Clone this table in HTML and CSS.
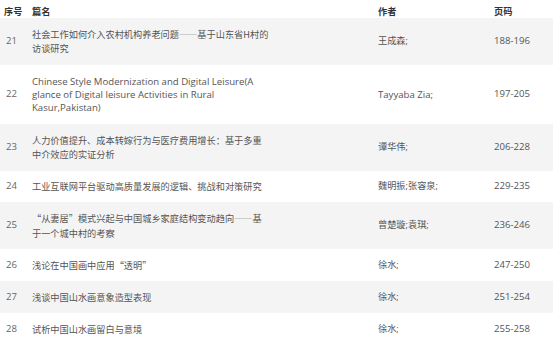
FILE: index.html
```html
<!DOCTYPE html>
<html lang="zh-CN">
<head>
<meta charset="utf-8">
<title>目录</title>
<link rel="stylesheet" href="styles.css">
</head>
<body>
<table class="toc">
  <colgroup>
    <col class="c-no">
    <col class="c-title">
    <col class="c-author">
    <col class="c-page">
  </colgroup>
  <thead>
    <tr>
      <th class="no">序号</th>
      <th>篇名</th>
      <th>作者</th>
      <th>页码</th>
    </tr>
  </thead>
  <tbody>
    <tr class="odd">
      <td class="no">21</td>
      <td class="title zh">社会工作如何介入农村机构养老问题——基于山东省H村的访谈研究</td>
      <td class="author">王成森;</td>
      <td>188-196</td>
    </tr>
    <tr class="en">
      <td class="no">22</td>
      <td class="title">Chinese Style Modernization and Digital Leisure(A glance of Digital leisure Activities in Rural Kasur,Pakistan)</td>
      <td class="author">Tayyaba Zia;</td>
      <td>197-205</td>
    </tr>
    <tr class="odd">
      <td class="no">23</td>
      <td class="title zh">人力价值提升、成本转嫁行为与医疗费用增长：基于多重中介效应的实证分析</td>
      <td class="author">谭华伟;</td>
      <td>206-228</td>
    </tr>
    <tr>
      <td class="no">24</td>
      <td class="title zh">工业互联网平台驱动高质量发展的逻辑、挑战和对策研究</td>
      <td class="author">魏明振;张容泉;</td>
      <td>229-235</td>
    </tr>
    <tr class="odd">
      <td class="no">25</td>
      <td class="title zh">“从妻居”模式兴起与中国城乡家庭结构变动趋向——基于一个城中村的考察</td>
      <td class="author">曾楚璇;袁琪;</td>
      <td>236-246</td>
    </tr>
    <tr>
      <td class="no">26</td>
      <td class="title zh">浅论在中国画中应用“透明”</td>
      <td class="author">徐水;</td>
      <td>247-250</td>
    </tr>
    <tr class="odd">
      <td class="no">27</td>
      <td class="title zh">浅谈中国山水画意象造型表现</td>
      <td class="author">徐水;</td>
      <td>251-254</td>
    </tr>
    <tr>
      <td class="no">28</td>
      <td class="title zh">试析中国山水画留白与意境</td>
      <td class="author">徐水;</td>
      <td>255-258</td>
    </tr>
  </tbody>
</table>
</body>
</html>
```
FILE: styles.css
```css
html, body {
  margin: 0;
  padding: 0;
  background: #ffffff;
}

body {
  font-family: "Open Sans", "Noto Sans CJK SC", sans-serif;
  font-size: 9.6px;
  color: #555555;
}

.toc {
  width: 553px;
  border-collapse: collapse;
  table-layout: fixed;
}

.c-no { width: 32px; }
.c-title { width: 346px; }
.c-author { width: 116px; }
.c-page { width: 59px; }

.toc th {
  height: 18px;
  padding: 3px 0 0 0;
  text-align: left;
  vertical-align: middle;
  font-family: "Noto Sans CJK SC", sans-serif;
  font-size: 9.2px;
  font-weight: bold;
  color: #333333;
  line-height: 14px;
  box-sizing: border-box;
}

.toc th.no {
  padding-left: 4px;
}

.toc td {
  padding: 8.7px 0;
  text-align: left;
  vertical-align: middle;
  line-height: 14.6px;
}

.toc td.no {
  padding-left: 6px;
  color: #666666;
}

.toc td.title {
  padding-right: 108px;
}

.toc td.zh,
.toc td.author {
  font-family: "Open Sans", "Noto Sans CJK SC", sans-serif;
  font-size: 9.2px;
}

.toc td.zh {
  font-family: "Noto Sans CJK SC", sans-serif;
}

.toc tr.en td {
  padding-top: 10.2px;
  padding-bottom: 10.2px;
}

.toc tr.en td.title,
.toc tr.en td.author {
  font-size: 9.6px;
  line-height: 13px;
}

.toc tr.odd td {
  background: #f4f4f4;
}
```
